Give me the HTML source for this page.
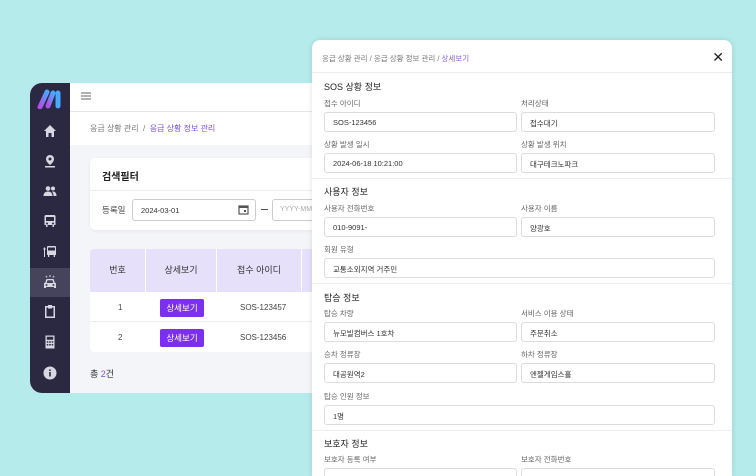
<!DOCTYPE html>
<html><head><meta charset="utf-8"><style>
*{box-sizing:border-box;margin:0;padding:0}
html{width:756px;height:476px;overflow:hidden}
body{width:756px;height:476px;overflow:hidden;background:#b5ebeb;font-family:"Liberation Sans","Noto Sans CJK KR",sans-serif;position:relative}
.win{position:absolute;left:30px;top:83px;width:400px;height:310px;background:#f4f5f8;border-radius:12px 0 0 12px;overflow:hidden}
.side{position:absolute;left:0;top:0;width:40px;height:310px;background:#2b2842}
.side .ic{position:absolute;left:13px;width:14px;height:14px;fill:#d8d8e2}
.side .sel{position:absolute;left:0;top:185px;width:40px;height:29px;background:#46435c}
.hdr{position:absolute;left:40px;top:0;right:0;height:29px;background:#fff;border-bottom:1px solid #e6e6ea}
.bc{position:absolute;left:40px;top:29px;right:0;height:33px;background:#fff;font-size:8px;color:#777;padding:11px 0 0 20px}
.bc b{font-weight:normal;color:#7c4ee4}
.card{position:absolute;left:60px;top:75px;width:300px;height:72px;background:#fff;border-radius:5px;box-shadow:0 1px 3px rgba(0,0,0,.06)}
.tbl{position:absolute;left:60px;top:166px;width:300px;height:103px;background:#fff;border-radius:4px;overflow:hidden;font-size:8px;color:#444}
.th{position:absolute;top:0;height:43px;background:#e6e0fb;font-size:9px;color:#333;text-align:center;line-height:43px}
.btn{position:absolute;left:70px;width:44px;height:18px;background:#7b2ff0;color:#fff;font-size:8.5px;text-align:center;line-height:18px;border-radius:2px}
.modal{position:absolute;left:312px;top:40px;width:420px;height:436px;background:#fff;border-radius:8px 8px 0 0;box-shadow:0 0 6px rgba(0,0,0,.12)}
.mh{height:33px;border-bottom:1px solid #ececef;font-size:7.5px;color:#777;padding:13px 0 0 10px}
.mh b{font-weight:normal;color:#8a5be6}
.x{position:absolute;right:8px;top:9px;font-size:14px;color:#222}
.st{position:absolute;left:12px;font-size:9px;color:#222}
.lb{position:absolute;font-size:7.5px;color:#666}
.in{position:absolute;height:20px;border:1px solid #dcdce0;border-radius:3px;font-size:7.5px;color:#333;padding:5px 0 0 8px}
.dv{position:absolute;left:0;right:0;height:1px;background:#efeff2}
</style></head><body>
<div class="win">
 <div class="side">
  <svg style="position:absolute;left:7px;top:6px" width="26" height="20" viewBox="0 0 26 20"><defs><linearGradient id="g" x1="0" y1="1" x2="1" y2="0"><stop offset="0" stop-color="#b44de8"/><stop offset="1" stop-color="#4aa7ff"/></linearGradient></defs><path d="M3 18 L10 3" stroke="url(#g)" stroke-width="5" stroke-linecap="round"/><path d="M11 17 L16 4" stroke="url(#g)" stroke-width="5" stroke-linecap="round"/><path d="M21 4 L21 17" stroke="#4aa7ff" stroke-width="5" stroke-linecap="round"/></svg>
  <div class="sel"></div>
  <svg class="ic" style="top:41px" viewBox="0 0 14 14"><path d="M7 1 L13 7 H11 V13 H8.5 V9 H5.5 V13 H3 V7 H1Z"/></svg>
  <svg class="ic" style="top:71px" viewBox="0 0 14 14"><path d="M7 1a4 4 0 0 1 4 4c0 3-4 6-4 6S3 8 3 5a4 4 0 0 1 4-4zm0 2.5a1.5 1.5 0 1 0 0 3 1.5 1.5 0 0 0 0-3zM2 12h10v1.5H2z"/></svg>
  <svg class="ic" style="top:101px" viewBox="0 0 14 14"><circle cx="5" cy="4.5" r="2.3"/><circle cx="10" cy="4.5" r="2"/><path d="M0.5 12c0-3 2-4.5 4.5-4.5S9.5 9 9.5 12zM10 7.5c2 0 3.5 1.5 3.5 4.5h-3c0-2-0.5-3.5-1.5-4.3z"/></svg>
  <svg class="ic" style="top:131px" viewBox="0 0 14 14"><path d="M3 1h8a1.5 1.5 0 0 1 1.5 1.5V11H11v2H9.5v-2h-5v2H3v-2H1.5V2.5A1.5 1.5 0 0 1 3 1zm0 2v4h8V3zm1 5.5a1 1 0 1 0 0 2 1 1 0 0 0 0-2zm6 0a1 1 0 1 0 0 2 1 1 0 0 0 0-2z"/></svg>
  <svg class="ic" style="top:161px" viewBox="0 0 14 14"><path d="M1 5h1v8H1zM0 5.5 1.5 3 3 5.5zM5 2h7a1 1 0 0 1 1 1v8h-1v2h-1.3v-2H6.3v2H5v-2H4V3a1 1 0 0 1 1-1zm0 1.5v3h7v-3z"/></svg>
  <svg class="ic" style="top:192px" viewBox="0 0 14 14"><path d="M6.5 0h1v2h-1zM2.5 1.2l.8-.6 1.2 1.5-.8.6zM11.5 1.2l-.8-.6-1.2 1.5.8.6zM3.5 4h7l1.5 4h1v5h-2v-1H3v1H1V8h1zm1 1.2L3.6 8h6.8l-.9-2.8zM3.5 9a1 1 0 1 0 0 2 1 1 0 0 0 0-2zm7 0a1 1 0 1 0 0 2 1 1 0 0 0 0-2z"/></svg>
  <svg class="ic" style="top:221px" viewBox="0 0 14 14"><path d="M2 2h3V1h4v1h3v12H2zm1.5 1.5v9h7v-9H9v1H5v-1z"/></svg>
  <svg class="ic" style="top:252px" viewBox="0 0 14 14"><path d="M2.5 0.5h9v13h-9zm1.3 1.3v3h6.4v-3zm0 4.5v1.5h1.5V6.3zm2.4 0v1.5h1.6V6.3zm2.5 0v1.5h1.5V6.3zM3.8 9v1.5h1.5V9zm2.4 0v1.5h1.6V9zm2.5 0v1.5h1.5V9z"/></svg>
  <svg class="ic" style="top:283px" viewBox="0 0 14 14"><circle cx="7" cy="7" r="6.5"/><rect x="6.2" y="6" width="1.6" height="4.5" fill="#2b2842"/><circle cx="7" cy="4.2" r="0.9" fill="#2b2842"/></svg>
 </div>
 <div class="hdr"><svg style="position:absolute;left:11px;top:9px" width="10" height="8"><path d="M0 1h10M0 4h10M0 7h10" stroke="#666" stroke-width="1"/></svg></div>
 <div class="bc">응급 상황 관리 &nbsp;/&nbsp; <b>응급 상황 정보 관리</b></div>
 <div class="card">
  <div style="position:absolute;left:12px;top:10px;font-size:10px;font-weight:bold;color:#222">검색필터</div>
  <div style="position:absolute;left:0;right:0;top:32px;height:1px;background:#eee"></div>
  <div style="position:absolute;left:12px;top:46px;font-size:8.5px;color:#444">등록일</div>
  <div style="position:absolute;left:42px;top:41px;width:124px;height:22px;border:1px solid #ccc;border-radius:3px;font-size:7.5px;color:#333;padding:6px 0 0 8px">2024-03-01
   <svg style="position:absolute;right:6px;top:4px" width="11" height="11" viewBox="0 0 11 11"><rect x="1" y="2" width="9" height="8" fill="none" stroke="#555" stroke-width="1.2"/><rect x="1" y="2" width="9" height="2" fill="#555"/><rect x="6" y="6" width="2" height="2" fill="#555"/></svg></div>
  <div style="position:absolute;left:171px;top:51px;width:7px;height:1px;background:#555"></div>
  <div style="position:absolute;left:182px;top:41px;width:130px;height:22px;border:1px solid #ccc;border-radius:3px;font-size:7px;color:#aaa;padding:6px 0 0 7px">YYYY-MM-DD</div>
 </div>
 <div class="tbl">
  <div class="th" style="left:0;width:55px">번호</div>
  <div class="th" style="left:56px;width:70px">상세보기</div>
  <div class="th" style="left:127px;width:84px">접수 아이디</div>
  <div class="th" style="left:212px;width:100px"></div>
  <div style="position:absolute;left:0;right:0;top:72px;height:1px;background:#eee"></div>
  <div style="position:absolute;left:28px;top:54px">1</div>
  <div class="btn" style="top:50px">상세보기</div>
  <div style="position:absolute;left:150px;top:54px">SOS-123457</div>
  <div style="position:absolute;left:28px;top:84px">2</div>
  <div class="btn" style="top:80px">상세보기</div>
  <div style="position:absolute;left:150px;top:84px">SOS-123456</div>
 </div>
 <div style="position:absolute;left:60px;top:284px;font-size:9px;color:#333">총 <span style="color:#7c4ee4">2</span>건</div>
</div>

<div class="modal">
 <div class="mh">응급 상황 관리 / 응급 상황 정보 관리 / <b>상세보기</b></div>
 <div class="x">✕</div>
 <div class="st" style="top:40px">SOS 상황 정보</div>
 <div class="lb" style="left:12px;top:58px">접수 아이디</div><div class="lb" style="left:209px;top:58px">처리상태</div>
 <div class="in" style="left:12px;top:72px;width:193px">SOS-123456</div><div class="in" style="left:209px;top:72px;width:194px">접수대기</div>
 <div class="lb" style="left:12px;top:99px">상황 발생 일시</div><div class="lb" style="left:209px;top:99px">상황 발생 위치</div>
 <div class="in" style="left:12px;top:113px;width:193px">2024-06-18 10:21:00</div><div class="in" style="left:209px;top:113px;width:194px">대구테크노파크</div>
 <div class="dv" style="top:138px"></div>
 <div class="st" style="top:145px">사용자 정보</div>
 <div class="lb" style="left:12px;top:163px">사용자 전화번호</div><div class="lb" style="left:209px;top:163px">사용자 이름</div>
 <div class="in" style="left:12px;top:177px;width:193px">010-9091-</div><div class="in" style="left:209px;top:177px;width:194px">양광호</div>
 <div class="lb" style="left:12px;top:204px">회원 유형</div>
 <div class="in" style="left:12px;top:218px;width:391px">교통소외지역 거주민</div>
 <div class="dv" style="top:243px"></div>
 <div class="st" style="top:251px">탑승 정보</div>
 <div class="lb" style="left:12px;top:268px">탑승 차량</div><div class="lb" style="left:209px;top:268px">서비스 이용 상태</div>
 <div class="in" style="left:12px;top:282px;width:193px">뉴모빌컴버스 1호차</div><div class="in" style="left:209px;top:282px;width:194px">주문취소</div>
 <div class="lb" style="left:12px;top:309px">승차 정류장</div><div class="lb" style="left:209px;top:309px">하차 정류장</div>
 <div class="in" style="left:12px;top:323px;width:193px">대공원역2</div><div class="in" style="left:209px;top:323px;width:194px">엔젤게임스홀</div>
 <div class="lb" style="left:12px;top:351px">탑승 인원 정보</div>
 <div class="in" style="left:12px;top:365px;width:391px">1명</div>
 <div class="dv" style="top:390px"></div>
 <div class="st" style="top:397px">보호자 정보</div>
 <div class="lb" style="left:12px;top:414px">보호자 등록 여부</div><div class="lb" style="left:209px;top:414px">보호자 전화번호</div>
 <div class="in" style="left:12px;top:428px;width:193px"></div><div class="in" style="left:209px;top:428px;width:194px"></div>
</div>
</body></html>
